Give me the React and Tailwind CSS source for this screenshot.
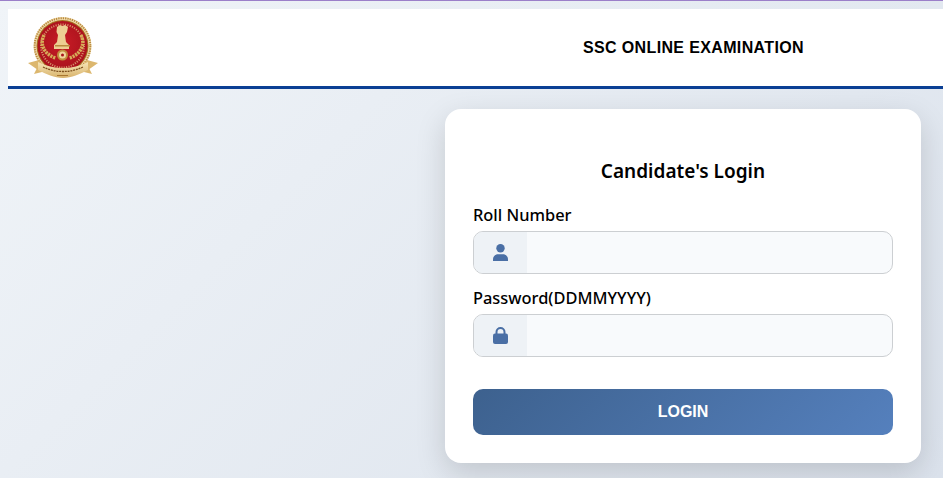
function Logo() {
  return (
    <svg width="70" height="62" viewBox="0 0 70 62" className="block">
      <defs>
        <radialGradient id="disc" cx="50%" cy="45%" r="55%">
          <stop offset="0%" stopColor="#c81c26" />
          <stop offset="100%" stopColor="#a8121c" />
        </radialGradient>
        <linearGradient id="ribbon" x1="0" y1="0" x2="0" y2="1">
          <stop offset="0%" stopColor="#f6e6b8" />
          <stop offset="100%" stopColor="#d8b26a" />
        </linearGradient>
      </defs>
      {/* outer ring */}
      <circle cx="34.500" cy="29" r="29" fill="#f0dcae" />
      <circle cx="34.500" cy="29" r="27.800" fill="none" stroke="#b98a3e" strokeWidth="2" strokeDasharray="1.300 1" />
      <circle cx="34.500" cy="29" r="26" fill="#a7731f" />
      <circle cx="34.500" cy="29" r="25" fill="url(#disc)" />
      <circle cx="34.500" cy="29" r="21.500" fill="none" stroke="#e8c98c" strokeWidth="2" strokeDasharray="1.100 1.300" opacity="0.7" />
      {/* wreath */}
      <path d="M16 18C11 28 17 38 28 41" fill="none" stroke="#d6ad58" strokeWidth="3.500" strokeDasharray="2.200 0.800" />
      <path d="M53 18C58 28 52 38 41 41" fill="none" stroke="#d6ad58" strokeWidth="3.500" strokeDasharray="2.200 0.800" />
      {/* lion capital */}
      <path d="M29 10l3-2 2.500 1 2.500-1 3 2-1 5-2 3 1 7 3 3v4H26v-4l3-3 1-7-1.500-3z" fill="#edcf93" />
      <rect x="27" y="28" width="15" height="1.500" fill="#b98a3e" />
      {/* lower seal */}
      <circle cx="34.500" cy="38" r="5.500" fill="#c08f3e" />
      <circle cx="34.500" cy="38" r="3.500" fill="#f0d79c" />
      <circle cx="34.500" cy="38" r="1.500" fill="#a8141c" />
      {/* ribbon */}
      <path d="M0 46l11-3 3 3v9l-8 2 2.500-5z" fill="#dcb76e" />
      <path d="M70 46l-11-3-3 3v9l8 2-2.500-5z" fill="#dcb76e" />
      <path d="M10 45c8 4 16.500 6 25 6s17-2 25-6v8c-8 4-16.500 8-25 8s-17-4-25-8z" fill="url(#ribbon)" />
      <path d="M15 50c6 3 13 4.500 20 4.500s14-1.500 20-4.500" fill="none" stroke="#7d4f1c" strokeWidth="1.300" strokeDasharray="2 0.800" />
      <path d="M29 58.500h11" stroke="#a9772f" strokeWidth="1" />
    </svg>
  )
}

function UserIcon() {
  return (
    <svg width="15" height="17" viewBox="0 0 15 17" fill="#4a6fa5">
      <circle cx="7.500" cy="4.300" r="4.200" />
      <path d="M0 17v-1.500C0 12.500 2.300 10.300 5 10.300h5c2.700 0 5 2.200 5 5.200V17z" />
    </svg>
  )
}

function LockIcon() {
  return (
    <svg width="15" height="17" viewBox="0 0 15 17">
      <path d="M3.500 8V5a4 4 0 0 1 8 0v3" fill="none" stroke="#4a6fa5" strokeWidth="2" />
      <rect x="0" y="6.500" width="15" height="10.500" rx="2" fill="#4a6fa5" />
    </svg>
  )
}

function Field({ label, icon }) {
  return (
    <div>
      <label className="block h-[24px] text-[16.4px] font-medium leading-[24px] text-black">{label}</label>
      <div className="mt-[4px] flex h-[43px] overflow-hidden rounded-[10px] border border-[#cccfd2] bg-[#f8fafc]">
        <span className="flex w-[53px] items-center justify-center bg-[#eef2f6]">{icon}</span>
        <input className="min-w-0 flex-1 bg-transparent px-3 outline-none" />
      </div>
    </div>
  )
}

export default function App() {
  return (
    <div className="h-[478px] w-[943px] overflow-hidden border-t border-[#9b7fc9] bg-[linear-gradient(135deg,#f0f4f8,#dbe2ec)] pl-2 pt-2">
      <header className="flex h-[80px] items-center border-b-[3px] border-[#0a3f94] bg-white pl-[20px]">
        <Logo />
        <h1 className="ml-[485px] font-['Liberation_Sans',sans-serif] text-[16px] font-bold tracking-[0.36px] text-black">
          SSC ONLINE EXAMINATION
        </h1>
      </header>
      <main className="flex justify-end pr-[22px] pt-[20px]">
        <div className="h-[354px] w-[476px] rounded-2xl bg-white px-[28px] pt-[48px] font-['Noto_Sans',sans-serif] shadow-[0_10px_30px_rgba(0,0,0,0.15)]">
          <h2 className="h-[28px] text-center text-[19px] font-semibold leading-[28px] text-black">Candidate's Login</h2>
          <div className="mt-[18px] flex flex-col gap-[12px]">
            <Field label="Roll Number" icon={<UserIcon />} />
            <Field label="Password(DDMMYYYY)" icon={<LockIcon />} />
          </div>
          <button
            type="button"
            className="mt-[32px] h-[46px] w-full rounded-[10px] bg-[linear-gradient(135deg,#3d618e,#5580bd)] font-['Liberation_Sans',sans-serif] text-[16px] font-bold text-white"
          >
            LOGIN
          </button>
        </div>
      </main>
    </div>
  )
}
